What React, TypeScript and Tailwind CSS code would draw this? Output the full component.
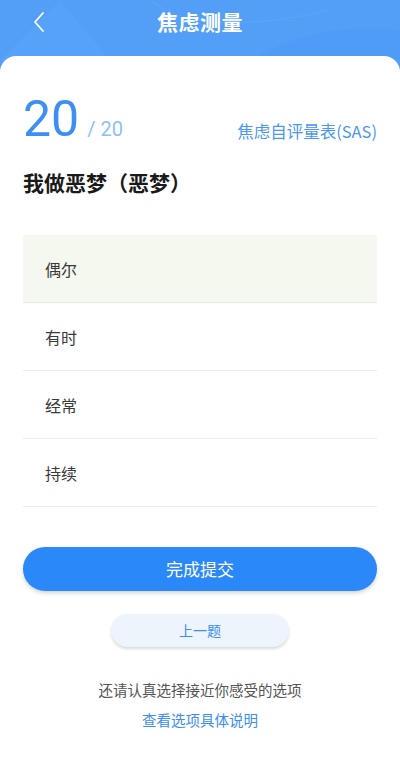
import React from 'react';

const options = ['偶尔', '有时', '经常', '持续'];

export default function App() {
  const selected = 0;

  return (
    <div
      className="relative min-h-[773px] w-[400px] overflow-hidden bg-[#539ff8]"
      style={{ fontFamily: '"Noto Sans CJK SC", Roboto, sans-serif' }}
    >
      {/* soft header decoration */}
      <svg className="absolute left-0 top-0" width="400" height="60" aria-hidden="true">
        <path d="M60 0 L110 60 L0 60 Z" fill="#5aa4f9" opacity="0.5" />
        <path d="M250 60 Q320 20 400 30 L400 60 Z" fill="#4b98f5" opacity="0.4" />
        <path d="M150 0 Q200 40 330 10" stroke="#63a9fa" strokeWidth="1" fill="none" opacity="0.6" />
      </svg>

      <header className="relative flex h-[43px] items-center justify-center">
        <button className="absolute left-[32px] top-[11px] text-white" aria-label="返回">
          <svg width="14" height="22" viewBox="0 0 14 22" fill="none">
            <path d="M11 2 L3 11 L11 20" stroke="currentColor" strokeWidth="1.8" strokeLinecap="round" strokeLinejoin="round" />
          </svg>
        </button>
        <h1 className="text-[21px] font-bold tracking-wide text-white">焦虑测量</h1>
      </header>

      <main className="relative mt-[13px] min-h-[717px] rounded-t-[16px] bg-white px-[23px] pt-[38px]">
        <div className="flex items-end justify-between">
          <div className="flex items-end">
            <span className="font-['Roboto'] text-[50px] leading-[50px] text-[#3d8ff5]">20</span>
            <span className="mb-[3px] ml-[8px] font-['Roboto'] text-[20px] leading-[24px] text-[#8cc0f6]">/ 20</span>
          </div>
          <span className="mb-[2px] text-[16.5px] leading-[22px] text-[#4a97f4]">焦虑自评量表(SAS)</span>
        </div>

        <h2 className="mt-[24px] text-[21px] font-bold leading-[28px] text-[#1a1a1a]">我做恶梦（恶梦）</h2>

        <ul className="mt-[39px]">
          {options.map((opt, i) => (
            <li
              key={opt}
              className={
                i === selected
                  ? 'flex h-[68px] items-center border-b border-[#e5eddc] bg-[#f5f8ef] px-[22px] text-[16px] text-[#3a3a3a]'
                  : 'flex h-[68px] items-center border-b border-[#ececec] px-[22px] text-[16px] text-[#3a3a3a]'
              }
            >
              {opt}
            </li>
          ))}
        </ul>

        <button className="mt-[40px] flex h-[44px] w-full items-center justify-center rounded-full bg-[#2b88f8] text-[17px] text-white shadow-[0_2px_4px_rgba(0,0,0,0.18)]">
          完成提交
        </button>

        <div className="mt-[23px] flex justify-center">
          <button className="flex h-[33px] w-[178px] items-center justify-center rounded-full bg-[#eef4fc] text-[14px] text-[#3a8ef5] shadow-[0_2px_3px_rgba(0,0,0,0.15)]">
            上一题
          </button>
        </div>

        <p className="mt-[33px] text-center text-[14.5px] leading-[20px] text-[#555]">还请认真选择接近你感受的选项</p>
        <p className="mt-[10px] text-center text-[14.5px] leading-[20px] text-[#3a8ef5]">查看选项具体说明</p>
      </main>
    </div>
  );
}
